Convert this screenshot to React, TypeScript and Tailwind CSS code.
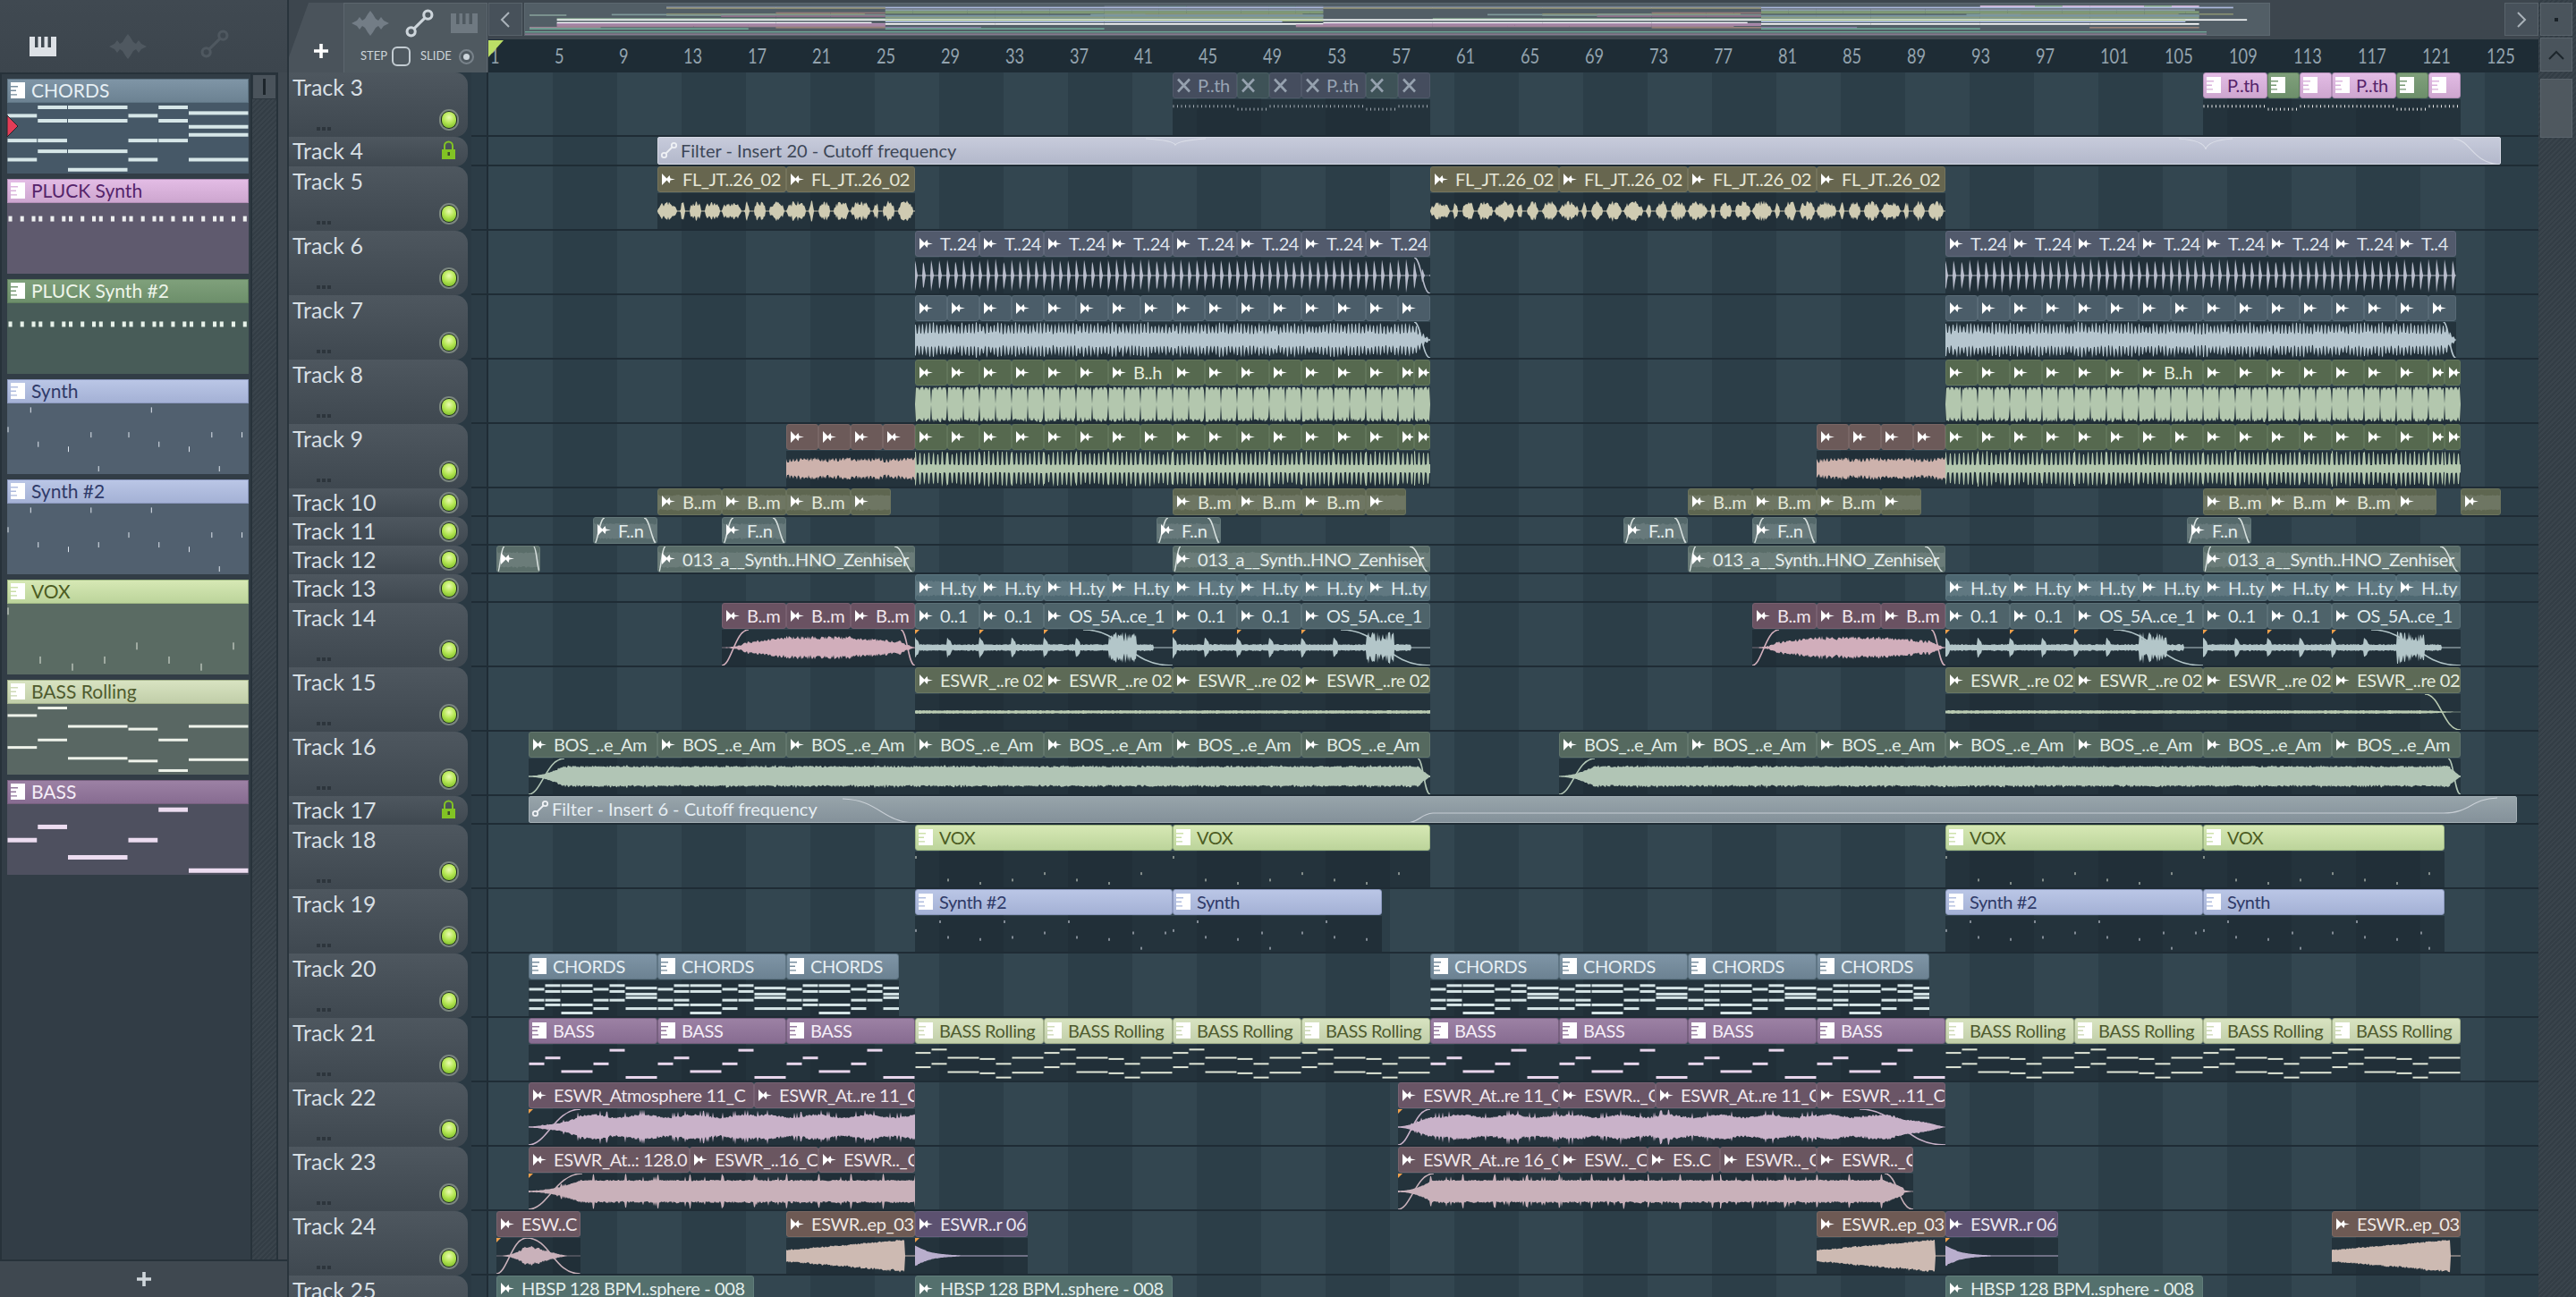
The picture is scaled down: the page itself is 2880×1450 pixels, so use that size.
import React from 'react';

// playlist geometry
const BAR = 18;
const BAR_OFFSET = 9;

type Pal = { hdr: string; text: string; wave: string; mini: string };

const pal: Record<string, Pal> = {
  olive: { hdr: 'bg-[#67664f] border-[#75745c]', text: 'text-[#e6e6d6]', wave: '#cfcbb2', mini: '#8c8b70' },
  slate: { hdr: 'bg-[#525a6c] border-[#5f6779]', text: 'text-[#dfe3ec]', wave: '#b7bbca', mini: '#7d8597' },
  steel: { hdr: 'bg-[#4b5d69] border-[#586a76]', text: 'text-[#dce6ec]', wave: '#b6c6cf', mini: '#8aa0a8' },
  green: { hdr: 'bg-[#56694f] border-[#61755a]', text: 'text-[#e3ecdc]', wave: '#b3c7ae', mini: '#7f9a76' },
  rust: { hdr: 'bg-[#6c5a59] border-[#786665]', text: 'text-[#efe6e4]', wave: '#cdb2ac', mini: '#93797a' },
  moss: { hdr: 'bg-[#5e6650] border-[#6b735d]', text: 'text-[#e3e8d8]', wave: '#c2c9ad', mini: '#878f72' },
  teal: { hdr: 'bg-[#55696b] border-[#627678]', text: 'text-[#e2ecec]', wave: '#bcd0cf', mini: '#7f9a9a' },
  sage: { hdr: 'bg-[#5a6d69] border-[#677a76]', text: 'text-[#e3ecea]', wave: '#bccdca', mini: '#839a96' },
  sea: { hdr: 'bg-[#4e6872] border-[#5b757f]', text: 'text-[#dfeaee]', wave: '#b7ccd2', mini: '#7997a3' },
  plum: { hdr: 'bg-[#6a5262] border-[#775f6f]', text: 'text-[#f0e6ec]', wave: '#d1aebb', mini: '#8f6f88' },
  ocean: { hdr: 'bg-[#4e636a] border-[#5b7077]', text: 'text-[#dfe9ec]', wave: '#b3c6c9', mini: '#7995a0' },
  fern: { hdr: 'bg-[#5d6a56] border-[#6a7763]', text: 'text-[#e4ebdf]', wave: '#b9cab1', mini: '#8a9a7e' },
  mint: { hdr: 'bg-[#55695f] border-[#62766c]', text: 'text-[#e0ebe5]', wave: '#b1c5b5', mini: '#7c9a88' },
  mauve: { hdr: 'bg-[#6a5566] border-[#776273]', text: 'text-[#eee6ec]', wave: '#c9b2c9', mini: '#a884a8' },
  rose: { hdr: 'bg-[#6a5660] border-[#77636d]', text: 'text-[#efe6ea]', wave: '#c9b1ba', mini: '#9f8496' },
  clay: { hdr: 'bg-[#6e5a54] border-[#7b6761]', text: 'text-[#efe8e4]', wave: '#cdbab2', mini: '#98827a' },
  iris: { hdr: 'bg-[#5c5170] border-[#695e7d]', text: 'text-[#e9e5f0]', wave: '#b9aecd', mini: '#8a7ea5' },
  lagoon: { hdr: 'bg-[#54706d] border-[#617d7a]', text: 'text-[#e2eeec]', wave: '#b9cfcc', mini: '#6ea596' },
  vox: { hdr: 'bg-gradient-to-b from-[#d6e8b4] to-[#bcd49b] border-[#9fb884]', text: 'text-[#4c5c22]', wave: '#e3e9da', mini: '#c5dba4' },
  synth: { hdr: 'bg-gradient-to-b from-[#bac6e6] to-[#a4b1d5] border-[#8c99bf]', text: 'text-[#2f3a68]', wave: '#dfe3ee', mini: '#aab7da' },
  chords: { hdr: 'bg-gradient-to-b from-[#7f95a6] to-[#6c8292] border-[#5f7584]', text: 'text-[#e6eff4]', wave: '#d5e4e6', mini: '#f3f6f7' },
  bass: { hdr: 'bg-gradient-to-b from-[#9c81a4] to-[#876c91] border-[#77607f]', text: 'text-[#f5eef8]', wave: '#e8d6ec', mini: '#b291b5' },
  rolling: { hdr: 'bg-gradient-to-b from-[#d8e3c1] to-[#c1cea9] border-[#a4b28c]', text: 'text-[#4f5b2e]', wave: '#dfe5d6', mini: '#ffffff' },
  pluck: { hdr: 'bg-gradient-to-b from-[#e3bce5] to-[#cda6cf] border-[#b48fb8]', text: 'text-[#55246a]', wave: '#e6e6e6', mini: '#e9c6e9' },
  pluck2: { hdr: 'bg-gradient-to-b from-[#7fa07b] to-[#6d8f6b] border-[#5f7f5e]', text: 'text-[#eef5ea]', wave: '#e6e6e6', mini: '#9dc09a' },
  mutedPink: { hdr: 'bg-[#454d5e] border-[#505869]', text: 'text-[#98a4b4]', wave: '#a0a8b0', mini: '#68727f' },
  mutedGreen: { hdr: 'bg-[#3e5257] border-[#495d62]', text: 'text-[#9ab0ae]', wave: '#a0a8b0', mini: '#62787a' },
};

type Note = [number, number, number];

const chordNotes: Note[] = [
  [1, 1, 0.04], [2, 2, 0.04], [5, 1, 0.04], [6, 2, 0.125], [0, 1, 0.165], [4, 1, 0.165], [1, 1, 0.24], [2, 2, 0.24], [5, 1, 0.24],
  [6, 2, 0.33], [6, 2, 0.45], [0, 1, 0.535], [1, 1, 0.535], [4, 1, 0.535], [5, 1, 0.535], [1, 1, 0.695], [2, 2, 0.695], [0, 1, 0.82],
  [4, 1, 0.82], [6, 2, 0.82], [2, 2, 0.97],
];
const bassNotes: Note[] = [[5, 1, 0.05], [1, 1, 0.31], [0, 1, 0.51], [4, 1, 0.51], [2, 2, 0.77], [6, 2, 0.97]];
const rollingNotes: Note[] = [
  [1, 1, 0.04], [0, 1, 0.15], [2, 2, 0.31], [4, 1, 0.35], [6, 2, 0.31], [5, 1, 0.51], [1, 1, 0.51], [0, 1, 0.62], [2, 2, 0.78], [4, 1, 0.82],
  [6, 2, 0.8], [5, 1, 0.96],
];
const synthNotes: Note[] = [
  [1.5, 0.1, 0.06], [9.5, 0.1, 0.06], [0, 0.1, 0.36], [5.5, 0.1, 0.44], [8, 0.1, 0.44], [13.5, 0.1, 0.44], [15.5, 0.1, 0.44], [2, 0.1, 0.585],
  [10, 0.1, 0.585], [4, 0.1, 0.66], [12, 0.1, 0.66], [6, 0.1, 0.96], [14, 0.1, 0.96],
];
const synth2Notes: Note[] = [
  [1.5, 0.1, 0.06], [5.5, 0.1, 0.06], [9.5, 0.1, 0.06], [0, 0.1, 0.36], [8, 0.1, 0.44], [13.5, 0.1, 0.44], [15.5, 0.1, 0.44], [2, 0.1, 0.59],
  [4, 0.1, 0.66], [6, 0.1, 0.59], [10, 0.1, 0.59], [12, 0.1, 0.66], [14, 0.1, 0.96],
];
const voxNotes: Note[] = [
  [0, 0.1, 0.06], [2, 0.1, 0.83], [4, 0.1, 0.94], [6, 0.1, 0.83], [8, 0.1, 0.61], [10, 0.1, 0.83], [12, 0.1, 0.94], [14, 0.1, 0.61],
];
const pluckDots = (y: number): Note[] => {
  const out: Note[] = [];
  for (let k = 0; k < 8; k++) for (const o of [0.03, 0.42, 0.8]) out.push([k + o, 0.15, y]);
  return out;
};

type Clip = {
  u: number;
  len: number;
  label?: string;
  pal: Pal;
  wave?: string;
  fi?: number;
  fo?: number;
  mark?: boolean;
  notes?: Note[];
  noteLen?: number;
  icon?: 'audio' | 'piano' | 'mute' | 'auto';
  noteH?: number;
};

const rep = (start: number, n: number, step: number, c: Omit<Clip, 'u' | 'len'>, len?: number): Clip[] =>
  Array.from({ length: n }, (_, i) => ({ ...c, u: start + i * step, len: len ?? step }));

const audio = (u: number, len: number, label: string, p: Pal, wave: string, extra: Partial<Clip> = {}): Clip => ({ u, len, label, pal: p, wave, ...extra });
const pattern = (u: number, len: number, label: string, p: Pal, notes: Note[], noteLen = 8, noteH = 3): Clip => ({
  u, len, label, pal: p, notes, noteLen, noteH, icon: 'piano',
});

const pluckClips = (u: number, muted: boolean): Clip[] => {
  const pink = muted ? pal.mutedPink : pal.pluck;
  const grn = muted ? pal.mutedGreen : pal.pluck2;
  const icon = muted ? 'mute' : 'piano';
  const dots = (y: number, n: number): Note[] => Array.from({ length: n }, (_, i) => [i * 0.25, 0.1, y]);
  return [
    { u, len: 4, label: 'P..th', pal: pink, icon, notes: dots(0.1, 16), noteLen: 4 },
    { u: u + 4, len: 2, pal: grn, icon, notes: dots(0.2, 8), noteLen: 2 },
    { u: u + 6, len: 2, pal: pink, icon, notes: dots(0.1, 8), noteLen: 2 },
    { u: u + 8, len: 4, label: 'P..th', pal: pink, icon, notes: dots(0.1, 16), noteLen: 4 },
    { u: u + 12, len: 2, pal: grn, icon, notes: dots(0.2, 8), noteLen: 2 },
    { u: u + 14, len: 2, pal: pink, icon, notes: dots(0.1, 8), noteLen: 2 },
  ];
};

const greenRun = (u: number, label?: boolean): Clip[] => {
  const w = label ? 'block' : 'bars';
  return [
    ...rep(u, 6, 2, { pal: pal.green, wave: w }),
    label ? audio(u + 12, 4, 'B..h', pal.green, w) : audio(u + 12, 2, '', pal.green, w),
    ...(label ? [] : [audio(u + 14, 2, '', pal.green, w)]),
    ...rep(u + 16, 6, 2, { pal: pal.green, wave: w }),
    audio(u + 28, 2, '', pal.green, w),
    audio(u + 30, 1, '', pal.green, w),
    audio(u + 31, 1, '', pal.green, w),
  ];
};

const tracks: { n: number; h: number; lock?: boolean; clips: Clip[] }[] = [
  { n: 3, h: 72, clips: [...pluckClips(42, true), ...pluckClips(106, false)] },
  { n: 4, h: 33, lock: true, clips: [{ u: 10, len: 114.5, label: 'Filter - Insert 20 - Cutoff frequency', pal: pal.synth, icon: 'auto' }] },
  {
    n: 5,
    h: 72,
    clips: [10, 18, 58, 66, 74, 82].map((u) => audio(u, 8, 'FL_JT..26_02', pal.olive, 'vocal')),
  },
  {
    n: 6,
    h: 72,
    clips: [
      ...rep(26, 7, 4, { label: 'T..24', pal: pal.slate, wave: 'pulse' }),
      audio(54, 4, 'T..24', pal.slate, 'pulse', { fo: 18 }),
      ...rep(90, 7, 4, { label: 'T..24', pal: pal.slate, wave: 'pulse' }),
      audio(118, 3.7, 'T..4', pal.slate, 'pulse'),
    ],
  },
  {
    n: 7,
    h: 72,
    clips: [
      ...rep(26, 15, 2, { pal: pal.steel, wave: 'dense' }),
      audio(56, 2, '', pal.steel, 'dense', { fo: 18 }),
      ...rep(90, 15, 2, { pal: pal.steel, wave: 'dense' }),
      audio(120, 1.7, '', pal.steel, 'dense', { fo: 14 }),
    ],
  },
  { n: 8, h: 72, clips: [...greenRun(26, true), ...greenRun(90, true)] },
  {
    n: 9,
    h: 72,
    clips: [
      ...rep(18, 4, 2, { pal: pal.rust, wave: 'riser' }),
      ...greenRun(26),
      ...rep(82, 4, 2, { pal: pal.rust, wave: 'riser' }),
      ...greenRun(90),
    ],
  },
  {
    n: 10,
    h: 32,
    clips: [10, 42, 74, 106].flatMap((u) => [
      ...rep(u, 3, 4, { label: 'B..m', pal: pal.moss, wave: 'faint' }),
      audio(u + 12, 2.5, '', pal.moss, 'faint'),
    ]).concat([audio(122, 2.5, '', pal.moss, 'faint')]),
  },
  {
    n: 11,
    h: 32,
    clips: [6, 14, 41, 70, 78, 105].map((u) => audio(u, 4, 'F..n', pal.teal, 'faint', { fi: 12, fo: 16 })),
  },
  {
    n: 12,
    h: 32,
    clips: [
      audio(0, 2.7, '', pal.sage, 'faint', { fi: 8, fo: 8 }),
      ...[10, 42, 74, 106].map((u) => audio(u, 16, '013_a__Synth..HNO_Zenhiser', pal.sage, 'faint', { fi: 8, fo: 24 })),
    ],
  },
  { n: 13, h: 32, clips: [...rep(26, 8, 4, { label: 'H..ty', pal: pal.sea, wave: 'faint' }), ...rep(90, 8, 4, { label: 'H..ty', pal: pal.sea, wave: 'faint' })] },
  {
    n: 14,
    h: 72,
    clips: [14, 78].flatMap((u) => [
      audio(u, 4, 'B..m', pal.plum, 'riserA', { fi: 30 }),
      audio(u + 4, 4, 'B..m', pal.plum, 'riserB'),
      audio(u + 8, 4, 'B..m', pal.plum, 'riserC', { fo: 16 }),
      audio(u + 12, 4, '0..1', pal.ocean, 'perc', { mark: true }),
      audio(u + 16, 4, '0..1', pal.ocean, 'perc', { mark: true }),
      audio(u + 20, 8, 'OS_5A..ce_1', pal.ocean, 'perc2', { mark: true, fo: 100 }),
      audio(u + 28, 4, '0..1', pal.ocean, 'perc', { mark: true }),
      audio(u + 32, 4, '0..1', pal.ocean, 'perc', { mark: true }),
      audio(u + 36, 8, 'OS_5A..ce_1', pal.ocean, 'perc2', { mark: true, fo: 100 }),
    ]),
  },
  {
    n: 15,
    h: 72,
    clips: [26, 34, 42, 50, 90, 98, 106, 114].map((u) => audio(u, 8, 'ESWR_..re 02', pal.fern, 'flat', u === 114 ? { fo: 40 } : {})),
  },
  {
    n: 16,
    h: 72,
    clips: [2, 10, 18, 26, 34, 42, 50, 66, 74, 82, 90, 98, 106, 114].map((u) =>
      audio(u, 8, 'BOS_..e_Am', pal.mint, 'bos', u === 2 || u === 66 ? { fi: 40 } : u === 50 || u === 114 ? { fo: 14 } : {}),
    ),
  },
  { n: 17, h: 32, lock: true, clips: [{ u: 2, len: 123.5, label: 'Filter - Insert 6 - Cutoff frequency', pal: pal.chords, icon: 'auto' }] },
  {
    n: 18,
    h: 72,
    clips: [pattern(26, 16, 'VOX', pal.vox, voxNotes, 15), pattern(42, 16, 'VOX', pal.vox, voxNotes, 15), pattern(90, 16, 'VOX', pal.vox, voxNotes, 15), pattern(106, 15, 'VOX', pal.vox, voxNotes, 15)],
  },
  {
    n: 19,
    h: 72,
    clips: [pattern(26, 16, 'Synth #2', pal.synth, synth2Notes, 16), pattern(42, 13, 'Synth', pal.synth, synthNotes, 16), pattern(90, 16, 'Synth #2', pal.synth, synth2Notes, 16), pattern(106, 15, 'Synth', pal.synth, synthNotes, 16)],
  },
  {
    n: 20,
    h: 72,
    clips: [
      pattern(2, 8, 'CHORDS', pal.chords, chordNotes),
      pattern(10, 8, 'CHORDS', pal.chords, chordNotes),
      pattern(18, 7, 'CHORDS', pal.chords, chordNotes),
      pattern(58, 8, 'CHORDS', pal.chords, chordNotes),
      pattern(66, 8, 'CHORDS', pal.chords, chordNotes),
      pattern(74, 8, 'CHORDS', pal.chords, chordNotes),
      pattern(82, 7, 'CHORDS', pal.chords, chordNotes),
    ],
  },
  {
    n: 21,
    h: 72,
    clips: [
      ...[2, 10, 18, 58, 66, 74, 82].map((u) => pattern(u, 8, 'BASS', pal.bass, bassNotes)),
      ...[26, 34, 42, 50, 90, 98, 106, 114].map((u) => pattern(u, 8, 'BASS Rolling', pal.rolling, rollingNotes, 8, 2)),
    ],
  },
  {
    n: 22,
    h: 72,
    clips: [
      audio(2, 14, 'ESWR_Atmosphere 11_C', pal.mauve, 'atmos', { fi: 58, mark: true }),
      audio(16, 10, 'ESWR_At..re 11_C', pal.mauve, 'atmos'),
      audio(56, 10, 'ESWR_At..re 11_C', pal.mauve, 'atmos', { fi: 36, mark: true }),
      audio(66, 6, 'ESWR.._C', pal.mauve, 'atmos'),
      audio(72, 10, 'ESWR_At..re 11_C', pal.mauve, 'atmos'),
      audio(82, 8, 'ESWR_..11_C', pal.mauve, 'atmosOut', { fo: 96 }),
    ],
  },
  {
    n: 23,
    h: 72,
    clips: [
      audio(2, 10, 'ESWR_At..: 128.0', pal.rose, 'spiky', { fi: 60, mark: true }),
      audio(12, 8, 'ESWR_..16_C', pal.rose, 'spiky'),
      audio(20, 6, 'ESWR.._C', pal.rose, 'spiky'),
      audio(56, 10, 'ESWR_At..re 16_C', pal.rose, 'spiky', { fi: 40, mark: true }),
      audio(66, 5.5, 'ESW.._C', pal.rose, 'spiky'),
      audio(71.5, 4.5, 'ES..C', pal.rose, 'spiky'),
      audio(76, 6, 'ESWR.._C', pal.rose, 'spiky'),
      audio(82, 6, 'ESWR.._C', pal.rose, 'spikyOut', { fo: 32 }),
    ],
  },
  {
    n: 24,
    h: 72,
    clips: [
      audio(0, 5.2, 'ESW..C', pal.rose, 'swell', { fi: 34, fo: 60, mark: true }),
      ...[18, 82, 114].map((u) => audio(u, 8, 'ESWR..ep_03', pal.clay, 'build')),
      ...[26, 90].map((u) => audio(u, 7, 'ESWR..r 06', pal.iris, 'decay', { mark: true })),
    ],
  },
  {
    n: 25,
    h: 72,
    clips: [
      audio(0, 16, 'HBSP 128 BPM..sphere - 008', pal.lagoon, 'none'),
      audio(26, 16, 'HBSP 128 BPM..sphere - 008', pal.lagoon, 'none'),
      audio(90, 16, 'HBSP 128 BPM..sphere - 008', pal.lagoon, 'none'),
    ],
  },
];

function rng(seed: number) {
  let s = seed;
  return () => {
    s = (s * 1664525 + 1013904223) % 4294967296;
    return s / 4294967296;
  };
}

const clamp = (v: number) => Math.max(0.015, Math.min(1, v));

// amplitude curve for each kind of sample; x in px, w the clip width
function ampAt(kind: string, x: number, w: number, r: () => number): number {
  const n = r();
  switch (kind) {
    case 'vocal': {
      const p = (x % 72) / 72;
      const lobes = [[0.01, 0.3], [0.36, 0.43], [0.5, 0.68], [0.74, 0.97]];
      for (const [a, b] of lobes) {
        if (p >= a && p < b) return Math.sin((Math.PI * (p - a)) / (b - a)) ** 0.4 * (0.28 + n * 0.32);
      }
      return 0.03;
    }
    case 'pulse': {
      const p = x % 9;
      return p === 0 ? 0.95 - n * 0.2 : p === 1 ? 0.62 : p === 2 ? 0.28 : 0.02;
    }
    case 'dense': {
      const p = x % 4;
      return p < 2 ? 0.7 + n * 0.3 : 0.3 + n * 0.2;
    }
    case 'block': {
      const p = x % 36;
      return p === 0 || p === 18 ? 0.04 : x % 5 === 0 ? 0.78 : 0.9 + n * 0.08;
    }
    case 'bars':
      return x % 5 < 2 ? 0.78 + n * 0.22 : 0.2 + n * 0.05;
    case 'riser':
      return (x % 4 === 0 ? 0.55 : 0.32 + n * 0.2) + (x / w) * 0.1;
    case 'riserA':
      return 0.05 + (x / w) * 0.4 + n * 0.16;
    case 'riserB':
      return 0.42 + n * 0.24;
    case 'riserC':
      return 0.45 * (1 - (x / w) * 0.6) + n * 0.16;
    case 'perc': {
      const p = x % 36;
      return 0.14 + n * 0.06 + (p < 5 ? 0.4 - p * 0.06 : 0);
    }
    case 'perc2': {
      const p = x % 36;
      const t = x / w;
      const base = t > 0.85 ? 0.02 : 0.14 + n * 0.06;
      const burst = t > 0.5 && t < 0.72 ? 0.5 * n + 0.2 : 0;
      return base + (p < 5 && t < 0.5 ? 0.4 - p * 0.06 : 0) + burst;
    }
    case 'flat':
      return 0.07 + n * 0.03;
    case 'bos':
      return 0.5 + n * 0.1 + (x % 11 === 0 ? 0.05 : 0);
    case 'atmos':
      return 0.55 + n * 0.12 + 0.08 * Math.sin(x / 9) + (n > 0.9 ? 0.22 : 0);
    case 'atmosOut': {
      const t = x / w;
      const e = t > 0.6 ? Math.max(0.02, 1 - (t - 0.6) * 2.5) : 1;
      return (0.55 + n * 0.12 + 0.08 * Math.sin(x / 9)) * e;
    }
    case 'spiky':
      return 0.58 + n * 0.08 + (x % 36 < 2 ? 0.33 : n > 0.94 ? 0.18 : 0);
    case 'spikyOut': {
      const t = x / w;
      return (0.58 + n * 0.08 + (x % 36 < 2 ? 0.33 : 0)) * (t > 0.9 ? 0.35 : 1);
    }
    case 'swell': {
      const t = x / w;
      return Math.sin(Math.PI * Math.min(1, t * 1.15)) * (t > 0.85 ? 0.03 : 0.58) * (0.7 + n * 0.3) + 0.02;
    }
    case 'build': {
      const t = x / w;
      return t > 0.92 ? 0.03 : 0.28 + t * 0.62 + n * 0.08;
    }
    case 'decay': {
      const t = x / w;
      return Math.max(0.02, 0.55 * Math.exp(-t * 7)) + (t < 0.1 ? 0.03 : 0);
    }
    default:
      return 0.02;
  }
}

function wavePath(kind: string, w: number, h: number, seed: number, fi = 0, fo = 0) {
  const r = rng(seed);
  const mid = h / 2;
  const top: string[] = [];
  const bot: string[] = [];
  for (let x = 0; x <= w; x++) {
    let a = ampAt(kind, x, w, r);
    if (fi && x < fi) a *= 0.06 + (x / fi) * (x / fi);
    if (fo && x > w - fo && kind !== 'perc2' && kind !== 'atmosOut') a *= Math.max(0.08, (w - x) / fo);
    const a2 = a * (0.9 + r() * 0.15);
    top.push(`${x},${(mid - clamp(a) * mid).toFixed(1)}`);
    bot.unshift(`${x},${(mid + clamp(a2) * mid).toFixed(1)}`);
  }
  return `M${top.join('L')}L${bot.join('L')}Z`;
}

function AudioIcon({ className = '' }: { className?: string }) {
  return (
    <svg width="17" height="13" viewBox="0 0 17 13" className={`shrink-0 ${className}`}>
      <path d="M1 0 L6.5 5.4 L9.5 2 L10.5 5.4 L16 6.5 L10.5 7.6 L9.5 11 L6.5 7.6 L1 13 Z" fill="currentColor" />
    </svg>
  );
}

function PianoIcon() {
  return (
    <svg width="16" height="18" viewBox="0 0 16 18" className="shrink-0">
      <path fillRule="evenodd" d="M0 0H16V18H0Z M0 4H8V5.4H0Z M0 8.6H6V10H0Z M0 13.2H7V14.6H0Z" fill="#ffffff" />
    </svg>
  );
}

function AutoIcon({ size = 20, stroke = '#eef0f4' }: { size?: number; stroke?: string }) {
  return (
    <svg width={size} height={size} viewBox="0 0 20 20" className="shrink-0" fill="none" stroke={stroke} strokeWidth="1.8">
      <circle cx="4.5" cy="15.5" r="2.7" />
      <circle cx="15.5" cy="4.5" r="2.7" />
      <path d="M6.5 13.5 L13.5 6.5" />
    </svg>
  );
}

function MuteIcon() {
  return (
    <svg width="17" height="17" viewBox="0 0 17 17" className="shrink-0" fill="none" stroke="#95a1ae" strokeWidth="2.6">
      <path d="M2 1.5 L15 15.5 M15 1.5 L2 15.5" />
    </svg>
  );
}

function FadeCurve({ w, h, fi, fo, color }: { w: number; h: number; fi?: number; fo?: number; color: string }) {
  return (
    <svg className="absolute left-0 top-0 pointer-events-none" width={w} height={h}>
      {fi ? <path d={`M0 ${h} C${fi * 0.35} ${h} ${fi * 0.5} 0 ${fi} 0`} fill="none" stroke={color} strokeWidth="1.6" /> : null}
      {fo ? <path d={`M${w - fo} 0 C${w - fo * 0.55} 0 ${w - fo * 0.5} ${h} ${w} ${h}`} fill="none" stroke={color} strokeWidth="1.6" /> : null}
    </svg>
  );
}

function Notes({ notes, total, width, height, color, noteH }: { notes: Note[]; total: number; width: number; height: number; color: string; noteH: number }) {
  const scale = width / total;
  return (
    <svg width={width} height={height} className="block">
      {notes.map(([s, l, y], i) => (
        <rect key={i} x={s * scale + 0.5} y={y * (height - noteH)} width={Math.max(1, l * scale - 1)} height={noteH} fill={color} />
      ))}
    </svg>
  );
}

function ClipView({ clip, rowH, seed }: { clip: Clip; rowH: number; seed: number }) {
  const left = BAR_OFFSET + clip.u * BAR;
  const width = clip.len * BAR;
  const small = rowH < 40;
  const p = clip.pal;
  const icon = clip.icon ?? 'audio';
  const iconEl =
    icon === 'piano' ? <PianoIcon /> : icon === 'mute' ? <MuteIcon /> : icon === 'auto' ? <AutoIcon /> : <AudioIcon className="text-white" />;

  if (icon === 'auto') {
    const light = p === pal.synth;
    const w = width;
    const curve = light
      ? `M1700 1 Q1728 3 1730 13 Q1732 3 1760 1 M545 1 Q576 3 578 8 Q582 3 612 1 M${w - 54} 1 C${w - 34} 2 ${w - 34} 29 ${w} 30`
      : `M350 2 C390 3 395 28 430 29 H980 C995 29 995 19 1010 18 H2140 C2170 18 2170 2 2200 1`;
    return (
      <div
        className={`absolute top-0 bottom-0 rounded-[2px] border overflow-hidden bg-gradient-to-b ${light ? 'from-[#c7cbdb] to-[#b3b8cb] border-[#d6d9e4]' : 'from-[#97a4aa] to-[#84919a] border-[#a5b0b6]'}`}
        style={{ left, width }}
      >
        <svg className="absolute left-0 top-0" width={w} height={32} fill="none" stroke="#e6e9ef" strokeOpacity="0.65" strokeWidth="1.2">
          <path d={curve} />
        </svg>
        <div className={`relative flex items-center gap-[3px] pl-[2px] pb-[2px] h-full text-[20px] whitespace-nowrap ${light ? 'text-[#3d4757]' : 'text-[#e6eef3]'}`}>
          {iconEl}
          <span>{clip.label}</span>
        </div>
      </div>
    );
  }

  if (small) {
    return (
      <div className={`absolute top-0 bottom-0 rounded-[3px] border ${p.hdr} overflow-hidden`} style={{ left, width }}>
        <svg className="absolute left-0 top-0" width={width} height={30}>
          <path d={wavePath('bos', Math.round(width), 30, seed)} fill="#dfe8e8" opacity="0.13" />
        </svg>
        {(clip.fi || clip.fo) && <FadeCurve w={width} h={30} fi={clip.fi} fo={clip.fo} color="#d5dedc" />}
        <div className={`relative flex items-center gap-[7px] pl-[3px] pb-[1px] h-full text-[20px] tracking-[-0.4px] whitespace-nowrap ${p.text}`}>
          {iconEl}
          <span>{clip.label}</span>
        </div>
      </div>
    );
  }

  const bodyH = rowH - 30;
  return (
    <div className="absolute top-0 bottom-0" style={{ left, width }}>
      <div className={`h-[29px] rounded-[3px] border ${p.hdr} overflow-hidden flex items-center gap-[7px] pl-[3px] pb-[1px] text-[20px] tracking-[-0.4px] whitespace-nowrap ${p.text}`}>
        {iconEl}
        {clip.label ? <span>{clip.label}</span> : null}
      </div>
      <div className="relative mt-px bg-[#1b262e]/60 overflow-hidden" style={{ height: bodyH }}>
        {clip.wave && clip.wave !== 'none' && (
          <svg className="absolute left-0 top-0" width={width} height={bodyH}>
            <path d={wavePath(clip.wave, Math.round(width), bodyH, seed, clip.fi, clip.fo)} fill={p.wave} />
          </svg>
        )}
        {clip.notes && (
          <div className="absolute left-0 top-[3px]">
            <Notes notes={clip.notes} total={clip.noteLen ?? 8} width={(clip.noteLen ?? 8) * BAR} height={bodyH - 4} color={p.wave} noteH={clip.noteH ?? 3} />
          </div>
        )}
        {(clip.fi || clip.fo) && <FadeCurve w={width} h={bodyH} fi={clip.fi} fo={clip.fo} color={p.wave} />}
        {clip.mark && <div className="absolute left-0 top-0 w-0 h-0 border-t-[5px] border-r-[5px] border-t-[#f0a04a] border-r-transparent" />}
      </div>
    </div>
  );
}

function Led() {
  return (
    <div className="w-[22px] h-[24px] rounded-full bg-[#7c8780] p-[2px] shrink-0">
      <div className="w-full h-full rounded-full bg-[#1c2a20] p-[1px]">
        <div className="w-full h-full rounded-full bg-[radial-gradient(circle_at_50%_35%,#e9fbb0_0%,#b4e653_45%,#6db01e_100%)]" />
      </div>
    </div>
  );
}

function Lock() {
  return (
    <svg width="17" height="22" viewBox="0 0 17 22" className="shrink-0 mr-[3px]">
      <path d="M4 10 V6 a4.5 4.5 0 0 1 9 0 V10" fill="none" stroke="#82c324" strokeWidth="2" />
      <rect x="1" y="10" width="15" height="11" fill="#82c324" />
      <rect x="7.5" y="13" width="2.5" height="4" fill="#3d4b2a" />
    </svg>
  );
}

function TrackRow({ n, h, lock, clips, index }: { n: number; h: number; lock?: boolean; clips: Clip[]; index: number }) {
  const tall = h > 40;
  return (
    <div className="flex shrink-0 bg-[#2a3943]" style={{ height: h }}>
      <div className="relative w-[200px] shrink-0 rounded-r-[14px] bg-gradient-to-b from-[#4e575f] to-[#3f4850] pl-[4px] text-[#d7dfe4]">
        <div className={`text-[25px] leading-none ${tall ? 'pt-[4px]' : 'pt-[3px]'}`}>Track {n}</div>
        {tall && (
          <div className="mt-[32px] ml-[27px] flex gap-[2px]">
            <div className="w-[4px] h-[4px] bg-[#2d353c]" />
            <div className="w-[4px] h-[4px] bg-[#2d353c]" />
            <div className="w-[4px] h-[4px] bg-[#2d353c]" />
          </div>
        )}
        <div className={`absolute right-[10px] ${tall ? 'bottom-[7px]' : 'top-[4px]'}`}>{lock ? <Lock /> : <Led />}</div>
      </div>
      <div className="w-[4px] shrink-0" />
      <div className="w-[19px] shrink-0 bg-[#2c3c46] border-r-2 border-b-2 border-[#1f2c35]" />
      <div className="relative flex-1 border-b-2 border-[#1f2c35] overflow-hidden bg-[repeating-linear-gradient(90deg,#334650_0px,#334650_72px,#2c3e48_72px,#2c3e48_144px)]">
        {clips.map((c, i) => (
          <ClipView key={i} clip={c} rowH={h - 2} seed={n * 131 + index + i * 17} />
        ))}
      </div>
    </div>
  );
}

const picker: { label: string; p: Pal; body: string; notes: Note[]; total: number; color: string; noteH: number }[] = [
  { label: 'CHORDS', p: pal.chords, body: 'bg-[#465867]', notes: chordNotes, total: 8, color: '#d6e6e8', noteH: 4 },
  { label: 'PLUCK Synth', p: pal.pluck, body: 'bg-[#5f5a6e]', notes: pluckDots(0.2), total: 8, color: '#eef0f0', noteH: 6 },
  { label: 'PLUCK Synth #2', p: pal.pluck2, body: 'bg-[#485c58]', notes: pluckDots(0.28), total: 8, color: '#e8f2ea', noteH: 6 },
  { label: 'Synth', p: pal.synth, body: 'bg-[#51606f]', notes: synthNotes, total: 16, color: '#dfe5ee', noteH: 6 },
  { label: 'Synth #2', p: pal.synth, body: 'bg-[#51606f]', notes: synth2Notes, total: 16, color: '#dfe5ee', noteH: 6 },
  { label: 'VOX', p: pal.vox, body: 'bg-[#5a6b63]', notes: voxNotes, total: 15, color: '#e3e9df', noteH: 8 },
  { label: 'BASS Rolling', p: pal.rolling, body: 'bg-[#596763]', notes: rollingNotes, total: 8, color: '#eef2ea', noteH: 3 },
  { label: 'BASS', p: pal.bass, body: 'bg-[#4e505f]', notes: bassNotes, total: 8, color: '#ecdcf0', noteH: 5 },
];

function PickerCard({ item }: { item: (typeof picker)[number] }) {
  return (
    <div className="shrink-0">
      <div className={`h-[27px] border flex items-center gap-[7px] pl-[3px] pb-[2px] text-[21px] whitespace-nowrap ${item.p.hdr} ${item.p.text}`}>
        <PianoIcon />
        <span>{item.label}</span>
      </div>
      <div className={`h-[79px] ${item.body}`}>
        <Notes notes={item.notes} total={item.total} width={270} height={79} color={item.color} noteH={item.noteH} />
      </div>
    </div>
  );
}

function WaveGlyph({ color, className }: { color: string; className?: string }) {
  return (
    <svg width="42" height="28" viewBox="0 0 42 28" className={className}>
      <path
        d="M0 14 L6 11 L9 7 L12 11 L15 9 L18 4 L21 0 L24 4 L27 9 L30 11 L33 7 L36 11 L42 14 L36 17 L33 21 L30 17 L27 19 L24 24 L21 28 L18 24 L15 19 L12 17 L9 21 L6 17 Z"
        fill={color}
      />
    </svg>
  );
}

function KeysGlyph({ color, w = 30, h = 22, notch }: { color: string; w?: number; h?: number; notch: string }) {
  return (
    <svg width={w} height={h} viewBox="0 0 30 22" className="shrink-0">
      <rect width="30" height="22" fill={color} />
      <rect x="6" y="0" width="3.5" height="12" fill={notch} />
      <rect x="13" y="0" width="3.5" height="12" fill={notch} />
      <rect x="20.5" y="0" width="3.5" height="12" fill={notch} />
    </svg>
  );
}

function Sidebar() {
  return (
    <div className="w-[323px] shrink-0 h-full flex flex-col bg-[#3f4850] border-r-2 border-[#29343c]">
      <div className="h-[81px] shrink-0 flex items-end pb-[18px] pl-[33px] bg-gradient-to-b from-[#404951] to-[#3c454d]">
        <KeysGlyph color="#dde1e6" notch="#3f4850" />
        <WaveGlyph color="#4f5860" className="ml-[59px] mb-[-3px]" />
        <span className="ml-[59px] mb-[-3px]">
          <AutoIcon size={34} stroke="#4f5860" />
        </span>
      </div>
      <div className="flex-1 min-h-0 flex pr-[10px]">
        <div className="relative flex-1 flex flex-col gap-[6px] pl-[6px] pr-[2px] pt-[5px] bg-[#323d46] border-t-2 border-l-2 border-[#27323a] overflow-hidden">
          {picker.map((it) => (
            <PickerCard key={it.label} item={it} />
          ))}
          <svg width="14" height="24" viewBox="0 0 14 24" className="absolute left-[5px] top-[46px]">
            <path d="M1 0 L13 12 L1 24 Z" fill="#e33c56" stroke="#24262c" strokeWidth="1" />
          </svg>
        </div>
        <div className="w-[31px] shrink-0 flex flex-col bg-[repeating-linear-gradient(135deg,#3a444c_0px,#3a444c_2px,#333d45_2px,#333d45_4px)] border-x-2 border-t-2 border-[#27323a]">
          <div className="h-[28px] shrink-0 bg-[#4a535b] border border-[#2b353d] flex items-center justify-center">
            <div className="w-[3px] h-[18px] bg-[#1d252b]" />
          </div>
        </div>
      </div>
      <div className="h-[42px] shrink-0 border-t-2 border-[#27323a] flex items-center justify-center text-[#cfd6db]">
        <svg width="16" height="16" viewBox="0 0 16 16">
          <path d="M6.2 0H9.8V6.2H16V9.8H9.8V16H6.2V9.8H0V6.2H6.2Z" fill="currentColor" />
        </svg>
      </div>
    </div>
  );
}

function Minimap() {
  let top = 81;
  const lines: { x: number; y: number; w: number; c: string }[] = [];
  for (const t of tracks) {
    for (const c of t.clips) {
      lines.push({ x: 5 + c.u * 15.3, y: top * 0.0186 + 0.8, w: c.len * 15.3, c: c.pal.mini });
    }
    top += t.h;
  }
  return (
    <svg width="1952" height="37" className="block bg-[#525e66] border border-[#5c6870]">
      {lines.map((l, i) => (
        <rect key={i} x={l.x} y={l.y} width={l.w} height="1.7" fill={l.c} />
      ))}
      <rect x="0" y="31" width="1880" height="1.4" fill="#6ea596" />
      <rect x="0" y="33.5" width="1880" height="1.4" fill="#8d7c92" />
    </svg>
  );
}

function TopBar() {
  const ruler = Array.from({ length: 32 }, (_, i) => i * 4 + 1);
  return (
    <div className="h-[81px] shrink-0 flex bg-[#3d464e]">
      <div className="w-[61px] shrink-0 pt-[3px]">
        <div className="h-[78px] flex items-end justify-center pb-[16px] pl-[10px] bg-[#4a535b] [clip-path:polygon(22px_0,100%_0,100%_100%,0_100%,0_78%)] text-white">
          <svg width="16" height="16" viewBox="0 0 16 16">
            <path d="M6.2 0H9.8V6.2H16V9.8H9.8V16H6.2V9.8H0V6.2H6.2Z" fill="currentColor" />
          </svg>
        </div>
      </div>
      <div className="w-[161px] shrink-0 mt-[3px] bg-[#4f5960] border-x border-t border-[#5c666e] flex flex-col">
        <div className="flex items-center pl-[8px] pt-[5px] gap-[17px]">
          <WaveGlyph color="#737d86" />
          <AutoIcon size={34} stroke="#cdd5db" />
          <KeysGlyph color="#6f7981" w={32} h={22} notch="#4f5960" />
        </div>
        <div className="flex items-center pl-[18px] pt-[9px] text-[13px] text-[#cdd5db]">
          <span>STEP</span>
          <div className="ml-[5px] w-[21px] h-[22px] rounded-md border-2 border-[#c3ccd2]" />
          <span className="ml-[11px]">SLIDE</span>
          <div className="ml-[8px] w-[17px] h-[17px] rounded-full border-2 border-[#79838b] flex items-center justify-center">
            <div className="w-[7px] h-[7px] rounded-full bg-[#cdd5db]" />
          </div>
        </div>
      </div>
      <div className="flex-1 min-w-0 ml-[1px] flex flex-col">
        <div className="h-[44px] shrink-0 pt-[3px] flex">
          <div className="w-[38px] h-[37px] shrink-0 bg-[#47515a] border border-[#59636b] flex items-center justify-center">
            <svg width="12" height="20" viewBox="0 0 12 20" fill="none" stroke="#aab3ba" strokeWidth="2">
              <path d="M10 2 L2 10 L10 18" />
            </svg>
          </div>
          <div className="ml-[2px]">
            <Minimap />
          </div>
          <div className="flex-1" />
          <div className="w-[38px] h-[37px] shrink-0 bg-[#47515a] border border-[#59636b] flex items-center justify-center">
            <svg width="12" height="20" viewBox="0 0 12 20" fill="none" stroke="#aab3ba" strokeWidth="2">
              <path d="M2 2 L10 10 L2 18" />
            </svg>
          </div>
        </div>
        <div className="relative flex-1 flex bg-[#1e2c35] overflow-hidden text-[24px] leading-none text-[#93a3ae]">
          {ruler.map((b) => (
            <div key={b} className="w-[72px] shrink-0 pl-[2px] pt-[6px]">
              <span className="inline-block origin-left scale-x-[0.76]">{b}</span>
            </div>
          ))}
          <svg width="17" height="20" viewBox="0 0 17 20" className="absolute left-0 top-0">
            <path d="M0 1 H17 L0 20 Z" fill="#bbde66" />
          </svg>
        </div>
      </div>
    </div>
  );
}

function RightRail() {
  return (
    <div className="w-[42px] shrink-0 h-full flex flex-col gap-[2px] pt-[3px] pl-[2px] pr-[4px] bg-[repeating-linear-gradient(135deg,#3a444c_0px,#3a444c_2px,#333d45_2px,#333d45_4px)]">
      <div className="h-[37px] shrink-0 bg-[#4a545c] border border-[#59636b] flex items-center justify-center">
        <div className="w-[4px] h-[4px] bg-[#1a2228]" />
      </div>
      <div className="h-[38px] shrink-0 bg-[#4a545c] border border-[#59636b] flex items-center justify-center">
        <svg width="18" height="11" viewBox="0 0 18 11" fill="none" stroke="#1d262c" strokeWidth="2">
          <path d="M1 10 L9 2 L17 10" />
        </svg>
      </div>
      <div className="h-[66px] mt-[6px] shrink-0 bg-[#4f585f] border border-[#59636b]" />
    </div>
  );
}

export default function App() {
  return (
    <div className="flex w-[2880px] h-[1450px] overflow-hidden bg-[#2a3943] font-['Lato','Liberation_Sans',sans-serif]">
      <Sidebar />
      <div className="w-[2515px] shrink-0 h-full flex flex-col overflow-hidden">
        <TopBar />
        {tracks.map((t, i) => (
          <TrackRow key={t.n} n={t.n} h={t.h} lock={t.lock} clips={t.clips} index={i} />
        ))}
      </div>
      <RightRail />
    </div>
  );
}
